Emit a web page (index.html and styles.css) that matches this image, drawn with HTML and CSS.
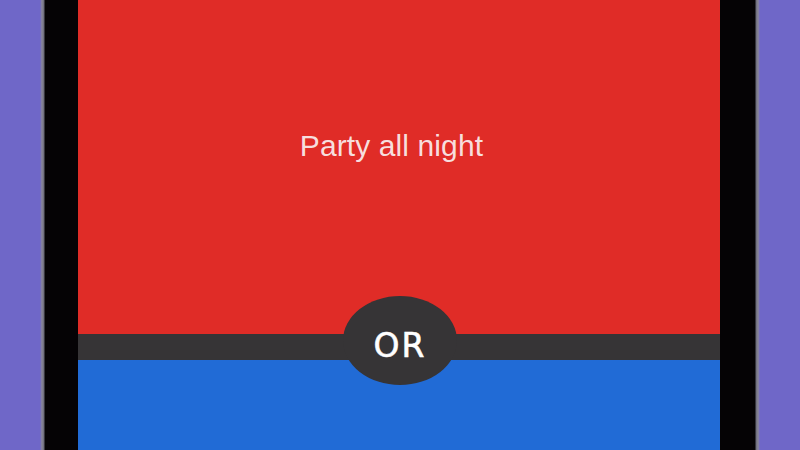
FILE: index.html
```html
<!DOCTYPE html>
<html>
<head>
<meta charset="utf-8">
<link rel="stylesheet" href="styles.css">
</head>
<body>
<div class="stage">
  <div class="side"></div>
  <div class="edge edge-left"></div>
  <div class="bezel bezel-left"></div>
  <div class="screen">
    <div class="option option-red">
      <span class="option-text">Party all night</span>
    </div>
    <div class="divider"></div>
    <div class="option option-blue"></div>
    <div class="or-badge"><span>OR</span></div>
  </div>
  <div class="bezel bezel-right"></div>
  <div class="edge edge-right"></div>
  <div class="side"></div>
</div>
</body>
</html>
```
FILE: styles.css
```css
html, body {
  margin: 0;
  padding: 0;
}
body {
  width: 800px;
  height: 450px;
  overflow: hidden;
  background: #6f67c8;
}
.stage {
  display: flex;
  width: 800px;
  height: 450px;
}
.side {
  width: 40px;
  background: #6f67c8;
}
.edge {
  width: 5px;
}
.edge-left {
  background: linear-gradient(to right, #6f67c8, #8a8898 40%, #6a6a78 80%, #050305);
}
.edge-right {
  background: linear-gradient(to right, #050305, #6a6a78 20%, #8a8898 60%, #6f67c8);
}
.bezel {
  background: #050305;
}
.bezel-left {
  width: 33px;
}
.bezel-right {
  width: 35px;
}
.screen {
  position: relative;
  width: 642px;
  display: flex;
  flex-direction: column;
}
.option-red {
  height: 334px;
  background: #e02c27;
  display: flex;
  justify-content: center;
  padding-top: 129px;
  box-sizing: border-box;
}
.option-text {
  font-family: "Liberation Sans", Arial, sans-serif;
  font-size: 30px;
  line-height: 34px;
  color: #f7dede;
  margin-right: 15px;
  letter-spacing: 0.1px;
}
.divider {
  height: 26px;
  background: #363436;
}
.option-blue {
  flex: 1;
  background: #216bd6;
}
.or-badge {
  position: absolute;
  left: 265px;
  top: 296px;
  width: 114px;
  height: 89px;
  border-radius: 50%;
  background: #363436;
  display: flex;
  align-items: center;
  justify-content: center;
}
.or-badge span {
  font-family: "DejaVu Sans", sans-serif;
  font-size: 33px;
  font-weight: normal;
  color: #ffffff;
  margin-top: 9px;
  letter-spacing: 2px;
  -webkit-text-stroke: 0.6px #ffffff;
}
```
